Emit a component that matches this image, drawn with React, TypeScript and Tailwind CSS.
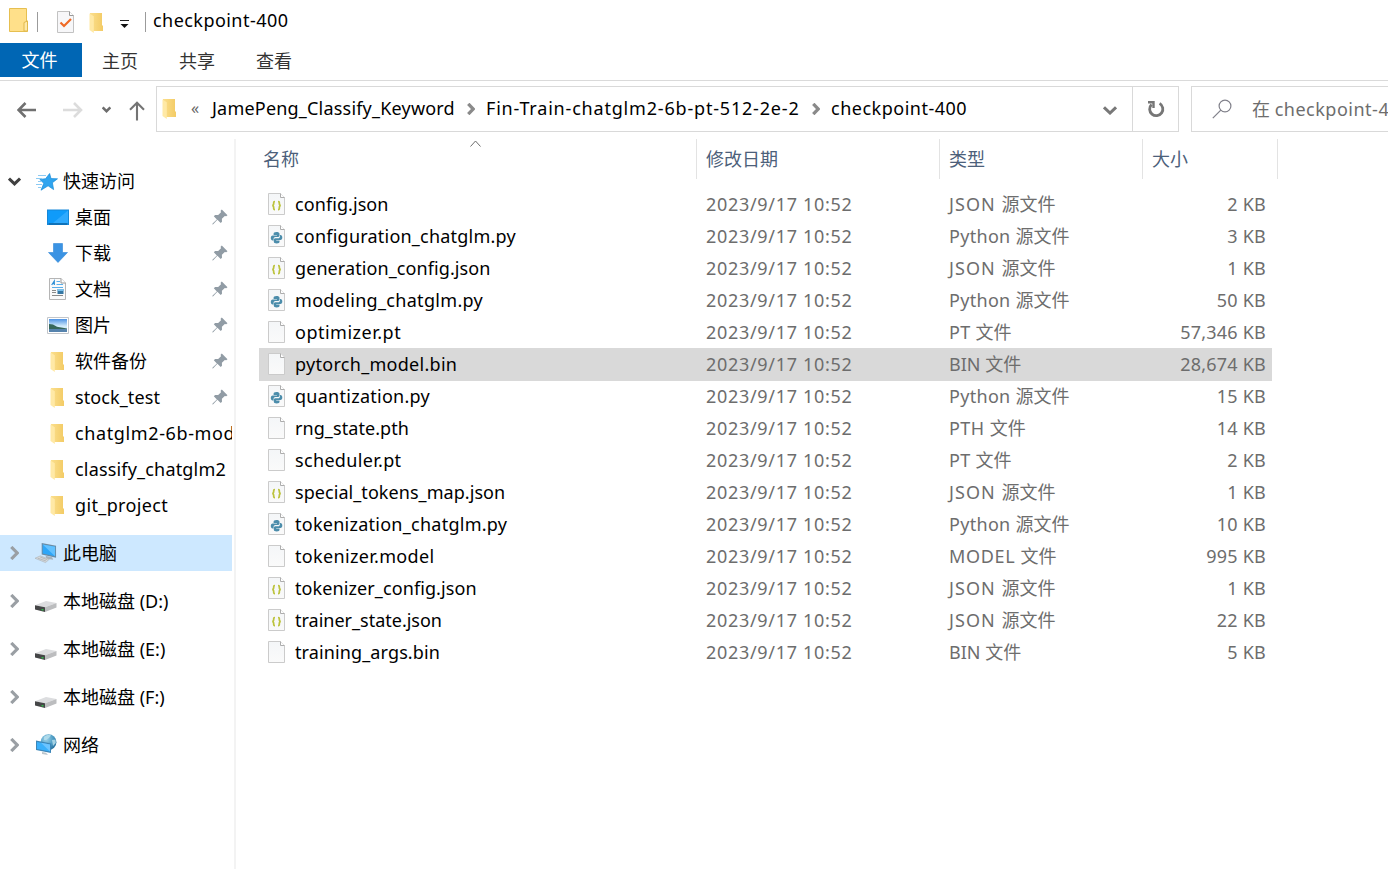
import type { ReactNode } from "react";

type IconKind = "json" | "py" | "blank";

const files: { name: string; icon: IconKind; type: string; size: string; track: string }[] = [
  { name: "config.json", icon: "json", type: "JSON", size: "2 KB", track: "tracking-[0.08px]" },
  { name: "configuration_chatglm.py", icon: "py", type: "Python", size: "3 KB", track: "tracking-[0.22px]" },
  { name: "generation_config.json", icon: "json", type: "JSON", size: "1 KB", track: "tracking-[0.09px]" },
  { name: "modeling_chatglm.py", icon: "py", type: "Python", size: "50 KB", track: "tracking-[0.32px]" },
  { name: "optimizer.pt", icon: "blank", type: "PT", size: "57,346 KB", track: "tracking-[0.5px]" },
  { name: "pytorch_model.bin", icon: "blank", type: "BIN", size: "28,674 KB", track: "tracking-[0.29px]" },
  { name: "quantization.py", icon: "py", type: "Python", size: "15 KB", track: "tracking-[0.27px]" },
  { name: "rng_state.pth", icon: "blank", type: "PTH", size: "14 KB", track: "tracking-[0.08px]" },
  { name: "scheduler.pt", icon: "blank", type: "PT", size: "2 KB", track: "tracking-[0.33px]" },
  { name: "special_tokens_map.json", icon: "json", type: "JSON", size: "1 KB", track: "tracking-[0.06px]" },
  { name: "tokenization_chatglm.py", icon: "py", type: "Python", size: "10 KB", track: "tracking-[0.26px]" },
  { name: "tokenizer.model", icon: "blank", type: "MODEL", size: "995 KB", track: "tracking-[0.33px]" },
  { name: "tokenizer_config.json", icon: "json", type: "JSON", size: "1 KB", track: "tracking-[0.1px]" },
  { name: "trainer_state.json", icon: "json", type: "JSON", size: "22 KB", track: "" },
  { name: "training_args.bin", icon: "blank", type: "BIN", size: "5 KB", track: "tracking-[0.12px]" },
];

const typeStyles: Record<string, { track: string; suffix: string }> = {
  JSON: { track: "tracking-[1.05px]", suffix: "源文件" },
  Python: { track: "tracking-[0.3px]", suffix: "源文件" },
  PT: { track: "tracking-[0.3px]", suffix: "文件" },
  PTH: { track: "tracking-[0.45px]", suffix: "文件" },
  BIN: { track: "", suffix: "文件" },
  MODEL: { track: "tracking-[0.65px]", suffix: "文件" },
};

function Folder({ className = "" }: { className?: string }) {
  return (
    <svg className={className} width="15" height="20" viewBox="0 0 15 20">
      <defs>
        <linearGradient id="fold" x1="0" x2="1">
          <stop offset="0" stopColor="#fbdf8d" />
          <stop offset="1" stopColor="#f3cb65" />
        </linearGradient>
      </defs>
      <path d="M1 0H13V12.5H14V18H4L1 16Z" fill="url(#fold)" />
      <path d="M0.5 0.5 4.8 3.2V20L0.5 17Z" fill="#ffe9a6" />
    </svg>
  );
}

function Chevron({ dir, className = "", width = 3 }: { dir: "down" | "right"; className?: string; width?: number }) {
  return dir === "down" ? (
    <svg className={className} viewBox="0 0 14 9" fill="none" stroke="currentColor" strokeWidth={width}>
      <path d="M1 1.3 7 7 13 1.3" />
    </svg>
  ) : (
    <svg className={className} viewBox="0 0 9 14" fill="none" stroke="currentColor" strokeWidth={width}>
      <path d="M1.3 1 7.2 7 1.3 13" />
    </svg>
  );
}

function Pin() {
  return (
    <svg width="16" height="16" viewBox="0 0 16 16" fill="#919ca5">
      <path d="M9.8 0.5 15.5 6.2 14.2 7.3 12.8 7 9.9 9.8 10 12.8 8.7 14.1 5.4 10.8 1.2 15.2 0.3 15.6 0.6 14.6 4.9 10.4 1.8 7.2 3.1 5.9 6.2 6.1 9 3.3 8.6 1.7Z" />
    </svg>
  );
}

function FileIcon({ kind }: { kind: IconKind }) {
  return (
    <svg width="17" height="22" viewBox="0 0 17 22">
      <defs>
        <linearGradient id="page" x1="0" x2="0" y1="0" y2="1">
          <stop offset="0" stopColor="#f4f6f8" />
          <stop offset="1" stopColor="#fafafa" />
        </linearGradient>
      </defs>
      <path d="M.5.5H12.5L16.5 4.5V21.5H.5Z" fill="url(#page)" stroke="#cbcbcb" />
      <path d="M12.5 .5V4.5H16.5" fill="#fff" stroke="#adadad" />
      {kind === "json" && (
        <g fill="none" stroke="#bcc33d" strokeWidth="1.7">
          <path d="M7 8.5C5.6 8.5 5.7 9.3 5.7 10.3 5.7 11.7 5.4 12.4 4.2 12.5 5.4 12.6 5.7 13.4 5.7 14.8 5.7 15.8 5.6 16.6 7 16.6" />
          <path d="M10 8.5C11.4 8.5 11.3 9.3 11.3 10.3 11.3 11.7 11.6 12.4 12.8 12.5 11.6 12.6 11.3 13.4 11.3 14.8 11.3 15.8 11.4 16.6 10 16.6" />
        </g>
      )}
      {kind === "py" && (
        <g fill="#4c8dab">
          <path d="M8.4 7C6.3 7 5.6 7.8 5.6 8.8V9.9H9V10.5H4.7C3.4 10.5 2.8 11.4 2.8 13 2.8 14.5 3.5 15.4 4.6 15.4H5.6V13.9C5.6 12.8 6.4 12.1 7.3 12.1H9.8C10.7 12.1 11.5 11.5 11.5 10.6V8.8C11.5 7.6 10.3 7 8.4 7Z" />
          <path d="M8.7 18.4C10.8 18.4 11.5 17.6 11.5 16.7V15.6H8.2V15H12.4C13.7 15 14.3 14.1 14.3 12.6 14.3 11 13.6 10.1 12.5 10.1H11.9V11.4C11.9 12.5 11.1 13.2 10.2 13.2H7.5C6.6 13.2 5.8 13.9 5.8 14.8V16.7C5.8 17.9 7 18.4 8.7 18.4Z" />
        </g>
      )}
    </svg>
  );
}

function Star() {
  return (
    <svg width="22" height="18" viewBox="0 0 22 18">
      <path d="M13.6 0.5 15 5.6 21.5 5.8 16.4 9.7 17.6 16.6 12.1 12.8 5 17.2 7.8 10.3 3.8 6.4 9.6 5.7Z" fill="#2fa4ef" stroke="#168bd9" strokeWidth=".7" />
      <path d="M2 2.5H10M0 5.5H6M2 8.5H6M0 11.5H6M2 14.5H5" stroke="#8ccaf3" strokeWidth="1" />
    </svg>
  );
}

function Desktop() {
  return (
    <svg width="22" height="17" viewBox="0 0 22 17">
      <path d="M0 .5H22V16H0Z" fill="#1587d8" />
      <path d="M1 1.5H21V14H1Z" fill="#0f9bfa" />
      <path d="M21 1.5V14H6Z" fill="#3db0ff" opacity=".7" />
      <path d="M2 15H20" stroke="#0b5c99" />
    </svg>
  );
}

function Download() {
  return (
    <svg width="20" height="20" viewBox="0 0 20 20">
      <path d="M5.5 .5H14.5V9.5H19.5L10 19.5.5 9.5H5.5Z" fill="#3b93e3" stroke="#2f86d8" strokeWidth=".6" />
    </svg>
  );
}

function Doc() {
  return (
    <svg width="17" height="22" viewBox="0 0 17 22">
      <path d="M.5.5H12L16.5 5V21.5H.5Z" fill="#fafafa" stroke="#b5b5b5" />
      <path d="M12 .5V5H16.5" fill="#fff" stroke="#999" />
      <path d="M2.7 7 5.3 3V7M4 5.5H5.5" fill="none" stroke="#2c8fd6" strokeWidth="1.2" />
      <path d="M7.5 3.5H11M7.5 6.5H14M3 9.5H14" stroke="#59aeea" />
      <path d="M3 12.5H7M3 14.5H7M3 17.5H14" stroke="#8a8a8a" />
      <path d="M8.5 11H14.5V16H8.5Z" fill="#3577a3" />
      <path d="M8.5 11H14.5V13H8.5Z" fill="#78c0ec" />
    </svg>
  );
}

function Picture() {
  return (
    <svg width="22" height="17" viewBox="0 0 22 17">
      <defs>
        <linearGradient id="sky" x1="0" x2="0" y1="0" y2="1">
          <stop offset="0" stopColor="#4e93e4" />
          <stop offset=".55" stopColor="#d3ecfb" />
        </linearGradient>
      </defs>
      <path d="M.5.5H21.5V16.5H.5Z" fill="#fff" stroke="#c3c6ca" />
      <path d="M2 2H20V15H2Z" fill="url(#sky)" />
      <path d="M2 7 6 7.5 10 9.8 20 11.5V12.5H2Z" fill="#36675a" />
      <path d="M2 12H20V15H2Z" fill="#5683ad" />
    </svg>
  );
}

function Computer() {
  return (
    <svg width="23" height="22" viewBox="0 0 23 22">
      <path d="M7 0.5 22 3.5V16L7 12.5Z" fill="#6b8ba3" />
      <path d="M8 2 21 4.5V14.5L8 11.5Z" fill="#2ea6f8" />
      <path d="M21 4.5V14.5L8 2Z" fill="#62c1ff" />
      <path d="M11 14 18 15.5 19 18 12 17Z" fill="#a7b2bb" />
      <path d="M0 16.5 5.5 14 15 17.5 11 21Z" fill="#d6d9dc" stroke="#a9afb4" strokeWidth=".6" />
      <path d="M3 16.5 11.5 19.3M5.5 15.3 13 18" stroke="#a4a9ad" strokeWidth=".7" />
    </svg>
  );
}

function Drive() {
  return (
    <svg width="22" height="12" viewBox="0 0 22 12">
      <path d="M0 5.2 11 1 21.5 3 10 7.2Z" fill="#dcdddf" />
      <path d="M10 7.2 21.5 3V7.5L10 12Z" fill="#bcbdbf" />
      <path d="M0 5.2 10 7.2V12L0 9.5Z" fill="#454647" />
      <path d="M6.5 9H8.5V10.5H6.5Z" fill="#32b44a" />
    </svg>
  );
}

function Network() {
  return (
    <svg width="21" height="22" viewBox="0 0 21 22">
      <defs>
        <radialGradient id="globe" cx=".35" cy=".3" r=".75">
          <stop offset="0" stopColor="#9ed3ea" />
          <stop offset=".6" stopColor="#4d9cc4" />
          <stop offset="1" stopColor="#276f9c" />
        </radialGradient>
      </defs>
      <circle cx="12.5" cy="8.2" r="7.9" fill="url(#globe)" />
      <path d="M8 3C10 1 13 .5 15 1.5L13 4 10 6 8 6ZM16 6 19.5 5.5 19.8 9 17 12Z" fill="#b5deec" opacity=".85" />
      <path d="M0 6.5 15 9.5V19L0 16Z" fill="#3c86b8" />
      <path d="M1 7.9 14 10.5V17.6L1 15Z" fill="#3ab0fb" />
      <path d="M14 10.5V17.6L5 8.7Z" fill="#6cc4ff" />
      <path d="M6 18 10 18.7 12 21 6 20Z" fill="#bcc6cd" />
    </svg>
  );
}

const quick: { label: string; icon: ReactNode; pin: boolean; track: string }[] = [
  { label: "桌面", icon: <Desktop />, pin: true, track: "" },
  { label: "下载", icon: <Download />, pin: true, track: "" },
  { label: "文档", icon: <Doc />, pin: true, track: "" },
  { label: "图片", icon: <Picture />, pin: true, track: "" },
  { label: "软件备份", icon: <Folder className="mt-[2px]" />, pin: true, track: "" },
  { label: "stock_test", icon: <Folder className="mt-[2px]" />, pin: true, track: "tracking-[0.1px]" },
  { label: "chatglm2-6b-mod", icon: <Folder className="mt-[2px]" />, pin: false, track: "tracking-[0.62px]" },
  { label: "classify_chatglm2", icon: <Folder className="mt-[2px]" />, pin: false, track: "tracking-[0.18px]" },
  { label: "git_project", icon: <Folder className="mt-[2px]" />, pin: false, track: "tracking-[0.36px]" },
];

const places: { label: string; icon: ReactNode; active?: boolean }[] = [
  { label: "此电脑", icon: <Computer />, active: true },
  { label: "本地磁盘 (D:)", icon: <span className="mt-[9px]"><Drive /></span> },
  { label: "本地磁盘 (E:)", icon: <span className="mt-[9px]"><Drive /></span> },
  { label: "本地磁盘 (F:)", icon: <span className="mt-[9px]"><Drive /></span> },
  { label: "网络", icon: <Network /> },
];

function TitleBar() {
  return (
    <div className="flex h-[43px] shrink-0 items-start pl-[9px]">
      <svg className="mt-2" width="19" height="24" viewBox="0 0 19 24">
        <path d="M.5.5H17.5V13H18.5V23.5H.5Z" fill="#ffe08a" stroke="#e6bf50" />
        <path d="M15 23V14.5L18.5 13V23Z" fill="#ffe9a8" stroke="#e0b94b" />
      </svg>
      <span className="ml-[9px] mt-3 h-5 w-px bg-[#9b9b9b]" />
      <svg className="ml-[19px] mt-[11px]" width="18" height="22" viewBox="0 0 18 22">
        <path d="M.5.5H12.5L16.5 4.5V21.5H.5Z" fill="#f7f7f9" stroke="#c2c2c2" />
        <path d="M12.5.5V4.5H16.5" fill="#fff" stroke="#999" />
        <path d="M3.5 11.5 7 15 14 8" fill="none" stroke="#ef6a26" strokeWidth="2.2" />
      </svg>
      <Folder className="ml-[14px] mt-[13px]" />
      <svg className="ml-4 mt-5" width="10" height="8" viewBox="0 0 10 8">
        <path d="M0 .5H9" stroke="#222" />
        <path d="M.5 4H8.5L4.5 8Z" fill="#111" />
      </svg>
      <span className="ml-[15px] mt-3 h-5 w-px bg-[#9b9b9b]" />
      <span className="ml-[7px] mt-[7px] leading-[26px] tracking-[0.45px]">checkpoint-400</span>
    </div>
  );
}

function Tabs() {
  return (
    <div className="flex h-[38px] shrink-0 items-start border-b border-[#dadada] leading-[34px] text-[#333]">
      <div className="flex h-[34px] w-[82px] justify-center bg-[#0066b4] pr-[3px] text-white">文件</div>
      <div className="ml-5 mt-px w-[77px]">主页</div>
      <div className="mt-px w-[77px]">共享</div>
      <div className="mt-px w-[77px]">查看</div>
    </div>
  );
}

function AddressBar() {
  return (
    <div className="flex h-[58px] shrink-0 items-start pt-[5px]">
      <div className="flex h-[46px] w-[156px] shrink-0 items-center pl-[17px] pt-px">
        <svg width="20" height="16" viewBox="0 0 20 16" fill="none" stroke="#707070" strokeWidth="2.6">
          <path d="M19 8H1.5M8.5 1 1.5 8 8.5 15" />
        </svg>
        <svg className="ml-[26px]" width="20" height="16" viewBox="0 0 20 16" fill="none" stroke="#dcdcdc" strokeWidth="2.6">
          <path d="M0 8H18M11 1 18 8 11 15" />
        </svg>
        <Chevron dir="down" className="ml-[19px] h-[7px] w-[9px] text-[#6d6d6d]" width={4} />
        <svg className="ml-[18px] mt-[2px]" width="17" height="20" viewBox="0 0 17 20" fill="none" stroke="#747474" strokeWidth="2.1">
          <path d="M8 19.5V2M1 8.8 8 1.8 15 8.8" />
        </svg>
      </div>
      <div className="flex h-[46px] w-[1023px] shrink-0 items-center border border-[#d9d9d9] pl-[5px]">
        <Folder className="mb-px shrink-0" />
        <span className="ml-[14px] mb-[2px] w-[21px] text-[16px] text-[#666]">«</span>
        <span className="mb-[2px] w-[243px] whitespace-nowrap tracking-[0.2px]">JamePeng_Classify_Keyword</span>
        <Chevron dir="right" className="ml-3 h-[12px] w-2 text-[#8a8a8a]" width={3.8} />
        <span className="mb-[2px] ml-[11px] w-[314px] whitespace-nowrap tracking-[0.81px]">Fin-Train-chatglm2-6b-pt-512-2e-2</span>
        <Chevron dir="right" className="ml-3 h-[12px] w-2 text-[#8a8a8a]" width={3.8} />
        <span className="mb-[2px] ml-[11px] whitespace-nowrap tracking-[0.5px]">checkpoint-400</span>
        <Chevron dir="down" className="ml-auto mr-[15px] mt-[3px] h-[9px] w-[14px] text-[#787878]" />
        <div className="flex h-full w-[46px] items-center justify-center border-l border-[#d9d9d9]">
          <svg width="18" height="18" viewBox="0 0 18 18" fill="none" stroke="#767676" strokeWidth="2.8">
            <path d="M12.6 3.4A6.6 6.6 0 1 1 4.6 4.4" />
            <path d="M1 2.2H6.5V8" strokeWidth="2.4" />
          </svg>
        </div>
      </div>
      <div className="ml-3 flex h-[46px] grow items-center overflow-hidden border border-r-0 border-[#d9d9d9] pl-5 text-[#6d6d6d]">
        <svg className="mb-px shrink-0" width="20" height="20" viewBox="0 0 20 20" fill="none" stroke="#80808a" strokeWidth="1.2">
          <circle cx="13" cy="7" r="5.9" />
          <path d="M8.8 11.2.8 19.2" />
        </svg>
        <span className="ml-5 whitespace-nowrap">在 <span className="tracking-[0.5px]">checkpoint-400</span></span>
      </div>
    </div>
  );
}

function Sidebar() {
  return (
    <div className="w-[236px] shrink-0 border-r-2 border-[#f3f3f3] pt-6">
      <div className="flex h-9 items-center pl-2">
        <Chevron dir="down" className="h-[9px] w-[13px] text-[#404040]" width={3.4} />
        <span className="ml-[15px] mt-[2px]"><Star /></span>
        <span className="ml-[5px] mt-px">快速访问</span>
      </div>
      {quick.map((q) => (
        <div key={q.label} className="flex h-9 w-[232px] items-center overflow-hidden pl-[46px]">
          <span className="flex w-[23px] shrink-0 justify-center">{q.icon}</span>
          <span className={`ml-[6px] whitespace-nowrap ${q.track}`}>{q.label}</span>
          {q.pin && <span className="ml-auto mr-[4px]"><Pin /></span>}
        </div>
      ))}
      {places.map((p) => (
        <div key={p.label} className={`mt-3 flex h-9 w-[232px] items-center pl-[10px] ${p.active ? "bg-[#cde8ff]" : ""}`}>
          <Chevron dir="right" className="h-[14px] w-[9px] text-[#9a9fa4]" width={3.2} />
          <span className="ml-4 flex w-[22px] justify-center">{p.icon}</span>
          <span className="ml-[6px] whitespace-nowrap">{p.label}</span>
        </div>
      ))}
    </div>
  );
}

function FileTable() {
  return (
    <div className="grow pl-[23px]">
      <div className="relative flex h-10 items-center text-[#4c607a]">
        <svg className="absolute left-[211px] top-px" width="12" height="7" viewBox="0 0 12 7" fill="none" stroke="#6d6d6d">
          <path d="M.5 6.5 5.5 1 10.5 6.5" />
        </svg>
        <div className="flex h-full w-[438px] items-center border-r border-[#e3e3e3] pl-1 pt-px">名称</div>
        <div className="flex h-full w-[243px] items-center border-r border-[#e3e3e3] pl-[9px] pt-px">修改日期</div>
        <div className="flex h-full w-[203px] items-center border-r border-[#e3e3e3] pl-[9px] pt-px">类型</div>
        <div className="flex h-full w-[135px] items-center border-r border-[#e3e3e3] pl-[9px] pt-px">大小</div>
      </div>
      <div className="mt-[9px]">
        {files.map((f) => (
          <div
            key={f.name}
            className={`flex h-8 w-[1013px] items-center whitespace-nowrap pl-[9px] pr-[6px] text-[#6d6d6d] ${f.name === "pytorch_model.bin" ? "bg-[#d9d9d9] shadow-[0_1px_0_#d9d9d9]" : ""}`}
          >
            <FileIcon kind={f.icon} />
            <span className={`ml-[10px] w-[411px] text-black ${f.track}`}>{f.name}</span>
            <span className="w-[243px] tracking-[0.69px]">2023/9/17 10:52</span>
            <span>
              <span className={typeStyles[f.type].track}>{f.type} </span>
              {typeStyles[f.type].suffix}
            </span>
            <span className="ml-auto tracking-[0.22px]">{f.size}</span>
          </div>
        ))}
      </div>
    </div>
  );
}

export default function App() {
  return (
    <div className="flex h-[869px] w-[1388px] flex-col overflow-hidden bg-white font-['Noto_Sans','Noto_Sans_CJK_SC',sans-serif] text-[18px] text-black">
      <TitleBar />
      <Tabs />
      <AddressBar />
      <div className="flex grow">
        <Sidebar />
        <FileTable />
      </div>
    </div>
  );
}
